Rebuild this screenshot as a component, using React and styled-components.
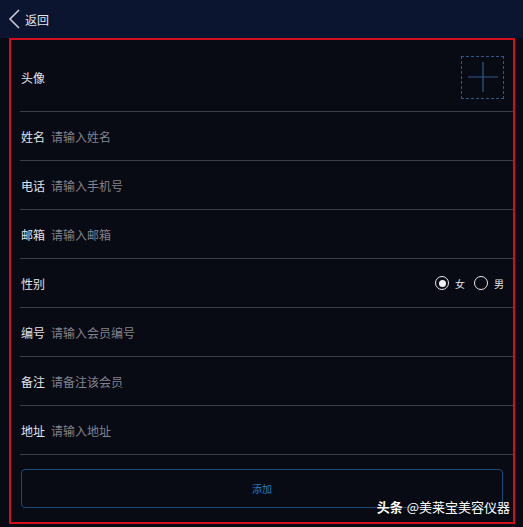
import React from 'react'
import styled, { createGlobalStyle } from 'styled-components'

const Global = createGlobalStyle`
   html, body {
      margin:0;
      padding:0;
      background:#080a14;
   }
   body {
      font-family:"Noto Sans CJK SC", "Noto Sans", sans-serif;
   }
`

const Page = styled.div`
   position:relative;
   width:523px;
   height:527px;
   background:#080a14;
   overflow:hidden;
`

const Header = styled.div`
   display:flex;
   align-items:center;
   height:38px;
   padding-left:8px;
   background:#0b1530;
   color:#e4e6ec;
   font-size:12px;
`

const Back = styled.div`
   display:flex;
   align-items:center;
   gap:3px;
   cursor:pointer;
`

const Frame = styled.div`
   margin:0 8px 0 9px;
   height:486px;
   border:2px solid #d30f1c;
   box-sizing:border-box;
   display:flex;
   flex-direction:column;
`

const Row = styled.div`
   display:flex;
   align-items:center;
   box-sizing:border-box;
   height:${p => p.$tall ? 72 : 49}px;
   padding-top:${p => p.$tall ? 3 : 0}px;
   margin-left:9px;
   padding-left:1px;
   padding-right:9px;
   border-bottom:1px solid #3b3e4a;
   flex-shrink:0;
`

const Label = styled.span`
   color:#e2e3e8;
   font-size:12px;
   width:30px;
   flex-shrink:0;
`

const Input = styled.input`
   flex:1;
   background:transparent;
   border:none;
   outline:none;
   color:#e2e3e8;
   font-size:12px;
   font-family:inherit;
   padding:0;

   &::placeholder {
      color:#80828c;
   }
`

const Avatar = styled.div`
   margin-left:auto;
   width:43px;
   height:43px;
   box-sizing:border-box;
   border:1px dashed #30588a;
   display:flex;
   align-items:center;
   justify-content:center;
`

const Radios = styled.div`
   margin-left:auto;
   display:flex;
   align-items:center;
   gap:9px;
`

const Radio = styled.label`
   display:flex;
   align-items:center;
   gap:6px;
   color:#e2e3e8;
   font-size:10px;
`

const Dot = styled.span`
   width:14px;
   height:14px;
   box-sizing:border-box;
   border-radius:50%;
   border:1.5px solid #e8e8ee;
   display:flex;
   align-items:center;
   justify-content:center;

   &::after {
      content:'';
      display:${p => p.$on ? 'block' : 'none'};
      width:7px;
      height:7px;
      border-radius:50%;
      background:#f2f2f6;
   }
`

const Button = styled.button`
   margin:14px 10px 0 10px;
   height:39px;
   background:#080a14;
   border:1px solid #1c4a78;
   border-radius:4px;
   color:#1f7ccc;
   font-size:10px;
   font-family:inherit;
   flex-shrink:0;
`

const Watermark = styled.div`
   position:absolute;
   right:13px;
   bottom:11px;
   color:#ffffff;
   font-size:13px;
   text-shadow:0 0 2px rgba(0,0,0,0.8);

   b {
      font-weight:700;
      margin-right:4px;
   }
`

const fields = [
   { label:'姓名', hint:'请输入姓名' },
   { label:'电话', hint:'请输入手机号' },
   { label:'邮箱', hint:'请输入邮箱' },
]

const more = [
   { label:'编号', hint:'请输入会员编号' },
   { label:'备注', hint:'请备注该会员' },
   { label:'地址', hint:'请输入地址' },
]

const App = () => (
   <Page>
      <Global />
      <Header>
         <Back>
            <svg width="14" height="20" viewBox="0 0 14 20">
               <path d="M11 1 L2 10 L11 19" fill="none" stroke="#c9ccd6" strokeWidth="1.6" />
            </svg>
            返回
         </Back>
      </Header>
      <Frame>
         <Row $tall>
            <Label>头像</Label>
            <Avatar>
               <svg width="30" height="30" viewBox="0 0 30 30">
                  <path d="M15 0 V30 M0 15 H30" stroke="#2f5a8c" strokeWidth="1.2" />
               </svg>
            </Avatar>
         </Row>
         {fields.map(f => (
            <Row key={f.label}>
               <Label>{f.label}</Label>
               <Input placeholder={f.hint} />
            </Row>
         ))}
         <Row>
            <Label>性别</Label>
            <Radios>
               <Radio><Dot $on />女</Radio>
               <Radio><Dot />男</Radio>
            </Radios>
         </Row>
         {more.map(f => (
            <Row key={f.label}>
               <Label>{f.label}</Label>
               <Input placeholder={f.hint} />
            </Row>
         ))}
         <Button>添加</Button>
      </Frame>
      <Watermark><b>头条</b>@美莱宝美容仪器</Watermark>
   </Page>
)

export default App
